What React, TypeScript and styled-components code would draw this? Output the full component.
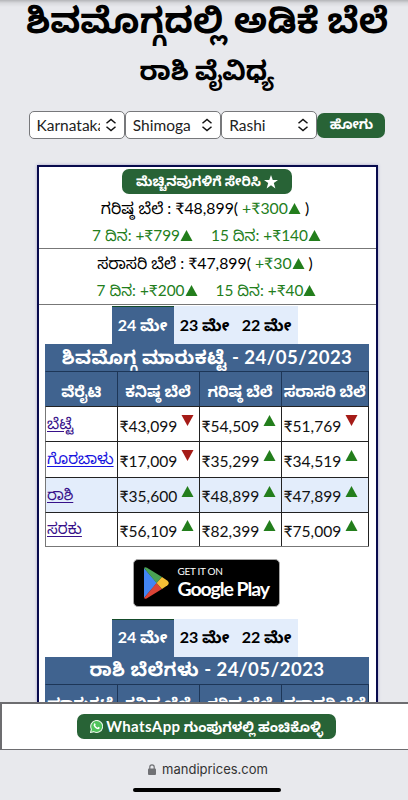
import React from "react";
import styled, { createGlobalStyle } from "styled-components";

const GlobalStyle = createGlobalStyle`
  * { box-sizing: border-box; }
  html, body { margin: 0; padding: 0; }
  body {
    background: #e8e9ed;
    color: #000;
    font-family: Lato, "Noto Sans Kannada", "Noto Sans", sans-serif;
    overflow: hidden;
  }
`;

const Screen = styled.div`
  width: 408px;
  height: 800px;
  overflow: hidden;
  display: flex;
  flex-direction: column;
  background: #e8e9ed;
`;

const Content = styled.main`
  height: 702px;
  flex: none;
  overflow: hidden;
  display: flex;
  flex-direction: column;
  align-items: center;
  padding-left: 6px;
  background: linear-gradient(#b4b5b8 0, #d8d9dd 3px, #e8e9ed 7px);
`;

const Title = styled.h1`
  margin: 0;
  height: 48px;
  flex: none;
  line-height: 38px;
  font-size: 35px;
  font-weight: 700;
  white-space: nowrap;
`;

const Subtitle = styled.h2`
  margin: 0;
  height: 63px;
  flex: none;
  line-height: 45px;
  font-size: 26px;
  font-weight: 700;
  white-space: nowrap;
`;

const Filters = styled.div`
  display: flex;
  flex: none;
  align-items: center;
  height: 28px;
  width: 357px;
`;

const Picker = styled.div`
  width: 96.4px;
  height: 28px;
  display: flex;
  align-items: center;
  justify-content: space-between;
  padding: 0 7px 0 7px;
  border: 1px solid #77787b;
  border-radius: 5px;
  background: #fff;
  font-size: 15.5px;
  color: #222;
`;

const PickerText = styled.span`
  width: 63px;
  overflow: hidden;
  white-space: nowrap;
`;

const Button = styled.button<{ $w: number; $size?: number }>`
  display: flex;
  align-items: center;
  justify-content: center;
  gap: 3px;
  flex: none;
  width: ${(p) => p.$w}px;
  height: 25px;
  padding: 2px 0 0;
  border: 0;
  border-radius: 7px;
  background: #286336;
  color: #fff;
  font: inherit;
  font-size: ${(p) => p.$size ?? 13.4}px;
  font-weight: 700;
  white-space: nowrap;
  svg { margin-top: -2px; }
`;

const Latin = styled.span`
  font-size: 15px;
  letter-spacing: 0.4px;
`;

const Card = styled.section`
  margin-top: 26px;
  width: 341px;
  height: 600px;
  flex: none;
  padding-top: 2px;
  border: 2px solid #080b4d;
  background: #fff;
  box-shadow: 0 0 3px #a5a6cb;
  display: flex;
  flex-direction: column;
  align-items: center;
`;

const Summary = styled.div<{ $h: number }>`
  width: 100%;
  height: ${(p) => p.$h}px;
  flex: none;
  border-bottom: 1px solid #777;
  display: flex;
  flex-direction: column;
  align-items: center;
`;

const Line = styled.div<{ $green?: boolean }>`
  height: 27px;
  flex: none;
  line-height: ${(p) => (p.$green ? 28 : 27)}px;
  margin-right: ${(p) => (p.$green ? 1 : 4)}px;
  display: flex;
  align-items: baseline;
  white-space: pre;
  font-size: ${(p) => (p.$green ? 15.4 : 15.8)}px;
  color: ${(p) => (p.$green ? "#237e1c" : "#000")};
`;

const Up = styled.span`
  color: #237e1c;
`;

const Gap = styled.span`
  width: 18px;
`;

const Tabs = styled.div`
  display: flex;
  width: 186px;
  height: 38px;
  flex: none;
  margin-top: 1px;
  margin-right: 5px;
  background: #e3edfb;
`;

const Tab = styled.div<{ $on?: boolean }>`
  width: 62px;
  display: flex;
  align-items: center;
  justify-content: center;
  padding-top: 3px;
  border-top: 1px solid ${(p) => (p.$on ? "#154c2b" : "#e3edfb")};
  background: ${(p) => (p.$on ? "#40638f" : "#e3edfb")};
  color: ${(p) => (p.$on ? "#fff" : "#000")};
  font-size: 16px;
  font-weight: 700;
  white-space: nowrap;
`;

const Table = styled.div`
  width: 324px;
  flex: none;
`;

const Caption = styled.div`
  height: 27px;
  display: flex;
  align-items: center;
  justify-content: center;
  padding-top: 4px;
  background: #40638f;
  color: #fff;
  font-size: 18.6px;
  font-weight: 700;
  letter-spacing: 0.45px;
  white-space: nowrap;
`;

const Row = styled.div<{ $kind?: "head" | "hot" }>`
  display: grid;
  grid-template-columns: 71.5px 82px 82px 87.5px;
  height: 35.2px;
  border-top: 1px solid ${(p) => (p.$kind === "head" ? "#1d3657" : "#222")};
  border-left: 1px solid ${(p) => (p.$kind === "head" ? "#40638f" : "#777")};
  background: ${(p) => (p.$kind === "head" ? "#40638f" : p.$kind === "hot" ? "#e3edfb" : "#fff")};
  color: ${(p) => (p.$kind === "head" ? "#fff" : "#111")};
  font-weight: ${(p) => (p.$kind === "head" ? 700 : 400)};
  &:last-child { border-bottom: 1px solid #777; }
`;

const Cell = styled.div<{ $head?: boolean }>`
  display: flex;
  align-items: center;
  justify-content: ${(p) => (p.$head ? "center" : "flex-start")};
  padding: ${(p) => (p.$head ? "8px 0 0 0" : "3px 0 0 2px")};
  border-right: 1px solid ${(p) => (p.$head ? "#1d3657" : "#222")};
  white-space: nowrap;
  font-size: ${(p) => (p.$head ? 15.2 : 15.6)}px;
`;

const Variety = styled.a<{ $fresh?: boolean }>`
  color: ${(p) => (p.$fresh ? "#1713de" : "#37118a")};
  font-size: 15.2px;
  margin-left: -1px;
  text-decoration: underline;
  text-underline-offset: 2px;
`;

const Arrow = styled.svg`
  margin-left: 4px;
  margin-bottom: 10px;
  flex: none;
`;

const PlayBadge = styled.div`
  width: 147px;
  height: 48px;
  flex: none;
  margin: 12px 2px 11px 0;
  display: flex;
  align-items: center;
  padding-left: 9px;
  gap: 9px;
  background: #000;
  border: 1px solid #a6a6a6;
  border-radius: 5px;
  color: #fff;
`;

const BadgeText = styled.div`
  display: flex;
  flex-direction: column;
  white-space: nowrap;
`;

const BadgeSmall = styled.span`
  font-size: 10px;
  line-height: 13px;
  letter-spacing: -0.3px;
`;

const BadgeBig = styled.span`
  font-size: 19.5px;
  line-height: 22px;
  font-weight: 700;
  letter-spacing: -1.1px;
`;

const ShareBar = styled.div`
  width: 408px;
  height: 48px;
  flex: none;
  display: flex;
  justify-content: center;
  align-items: center;
  padding-left: 3px;
  background: #fff;
  border: 1px solid #6d6d70;
  border-width: 2px 0 1px 2px;
`;

const Browser = styled.footer`
  flex: 1;
  display: flex;
  flex-direction: column;
  align-items: center;
  padding-left: 6px;
  background: #e8e9ed;
`;

const Address = styled.div`
  display: flex;
  align-items: center;
  gap: 6px;
  height: 38px;
  margin-left: 2px;
  font-family: Inter, sans-serif;
  font-size: 13px;
  color: #333;
`;

const HomeIndicator = styled.div`
  width: 148px;
  height: 4px;
  border-radius: 2px;
  background: #000;
`;

const Tri = ({ down = false }: { down?: boolean }) => (
  <Arrow width="13" height="11" viewBox="0 0 13 11">
    <path d={down ? "M0.5 0h12L6.5 11z" : "M6.5 0l6 11H0.5z"} fill={down ? "#a51b17" : "#237e1c"} />
  </Arrow>
);

const InlineUp = () => (
  <svg width="13" height="11" viewBox="0 0 13 11">
    <path d="M6.5 0l6 11H0.5z" fill="#237e1c" />
  </svg>
);

const Chevrons = () => (
  <svg width="12" height="14" viewBox="0 0 12 14" fill="none" stroke="#111" strokeWidth="1.5">
    <path d="M1.5 5.3L6 1.5l4.500 3.800M1.500 8.700L6 12.500l4.500-3.800" />
  </svg>
);

const columns = ["ಕನಿಷ್ಠ ಬೆಲೆ", "ಗರಿಷ್ಠ ಬೆಲೆ", "ಸರಾಸರಿ ಬೆಲೆ"];

const rows: { name: string; fresh?: boolean; hot?: boolean; prices: [string, boolean][] }[] = [
  { name: "ಬೆಟ್ಟೆ", prices: [["43,099", true], ["54,509", false], ["51,769", true]] },
  { name: "ಗೊರಬಾಳು", fresh: true, prices: [["17,009", true], ["35,299", false], ["34,519", false]] },
  { name: "ರಾಶಿ", hot: true, prices: [["35,600", false], ["48,899", false], ["47,899", false]] },
  { name: "ಸರಕು", prices: [["56,109", false], ["82,399", false], ["75,009", false]] },
];

const DateTabs = () => (
  <Tabs>
    <Tab $on>24 ಮೇ</Tab>
    <Tab>23 ಮೇ</Tab>
    <Tab>22 ಮೇ</Tab>
  </Tabs>
);

const Head = ({ first }: { first: string }) => (
  <Row $kind="head">
    {[first, ...columns].map((c) => (
      <Cell $head key={c}>{c}</Cell>
    ))}
  </Row>
);

export default function App() {
  return (
    <>
      <GlobalStyle />
      <Screen>
        <Content>
          <Title>ಶಿವಮೊಗ್ಗದಲ್ಲಿ ಅಡಿಕೆ ಬೆಲೆ</Title>
          <Subtitle>ರಾಶಿ ವೈವಿಧ್ಯ</Subtitle>
          <Filters>
            {["Karnataka", "Shimoga", "Rashi"].map((v) => (
              <Picker key={v}>
                <PickerText>{v}</PickerText>
                <Chevrons />
              </Picker>
            ))}
            <Button $w={68}>ಹೋಗು</Button>
          </Filters>
          <Card>
            <Summary $h={80}>
              <Button $w={170}>
                ಮೆಚ್ಚಿನವುಗಳಿಗೆ ಸೇರಿಸಿ
                <svg width="14" height="14" viewBox="0 0 24 24" fill="#fff">
                  <path d="M12 0l3 8.500h9l-7.200 5.400L19.500 23 12 17.500 4.500 23l2.700-9.100L0 8.500h9z" />
                </svg>
              </Button>
              <Line>ಗರಿಷ್ಠ ಬೆಲೆ : ₹48,899( <Up>+₹300<InlineUp /></Up> )</Line>
              <Line $green>7 ದಿನ: +₹799<InlineUp /><Gap />15 ದಿನ: +₹140<InlineUp /></Line>
            </Summary>
            <Summary $h={56}>
              <Line>ಸರಾಸರಿ ಬೆಲೆ : ₹47,899( <Up>+₹30<InlineUp /></Up> )</Line>
              <Line $green>7 ದಿನ: +₹200<InlineUp /><Gap />15 ದಿನ: +₹40<InlineUp /></Line>
            </Summary>
            <DateTabs />
            <Table>
              <Caption>ಶಿವಮೊಗ್ಗ ಮಾರುಕಟ್ಟೆ - 24/05/2023</Caption>
              <Head first="ವೆರೈಟಿ" />
              {rows.map((r) => (
                <Row key={r.name} $kind={r.hot ? "hot" : undefined}>
                  <Cell><Variety $fresh={r.fresh}>{r.name}</Variety></Cell>
                  {r.prices.map(([price, down]) => (
                    <Cell key={price}>₹{price}<Tri down={down} /></Cell>
                  ))}
                </Row>
              ))}
            </Table>
            <PlayBadge>
              <svg width="26" height="32" viewBox="0 0 26 32">
                <path d="M1 1v30l13-15z" fill="#4285f4" />
                <path d="M1 1Q2-.3 4 .8L19 10l-5.500 6z" fill="#4aa254" />
                <path d="M1 31Q2 32.300 4 31.200L19 22l-5.500-6z" fill="#dc4437" />
                <path d="M19 10l5.500 3.700q2.500 2.300 0 4.600L19 22l-5.500-6z" fill="#f5be35" />
              </svg>
              <BadgeText>
                <BadgeSmall>GET IT ON</BadgeSmall>
                <BadgeBig>Google Play</BadgeBig>
              </BadgeText>
            </PlayBadge>
            <DateTabs />
            <Table>
              <Caption>ರಾಶಿ ಬೆಲೆಗಳು - 24/05/2023</Caption>
              <Head first="ಮಾರುಕಟ್ಟೆ" />
            </Table>
          </Card>
        </Content>
        <ShareBar>
          <Button $w={259} $size={13.6}>
            <svg width="13" height="13" viewBox="0 0 24 24">
              <path d="M1 23l1.600-6A11 11 0 1 1 7 21.500z" fill="#50c35c" stroke="#e8f5e8" strokeWidth="2" />
              <path d="M7.500 6.500q1.500-1.500 2.300.4l.7 1.700-1 1.500q1.500 2.800 4.500 4l1.500-1.500 2.400 1.200q.5 1.500-1.500 2.700-3.500 1.500-7.500-2.700-3.800-4-1.400-7.300z" fill="#fff" />
            </svg>
            <span><Latin>WhatsApp</Latin> ಗುಂಪುಗಳಲ್ಲಿ ಹಂಚಿಕೊಳ್ಳಿ</span>
          </Button>
        </ShareBar>
        <Browser>
          <Address>
            <svg width="8" height="11" viewBox="0 0 8 11">
              <path d="M1.800 5V3a2.200 2.200 0 0 1 4.400 0v2" fill="none" stroke="#707175" strokeWidth="1.200" />
              <rect y="4.500" width="8" height="6.500" rx="1" fill="#707175" />
            </svg>
            mandiprices.com
          </Address>
          <HomeIndicator />
        </Browser>
      </Screen>
    </>
  );
}
